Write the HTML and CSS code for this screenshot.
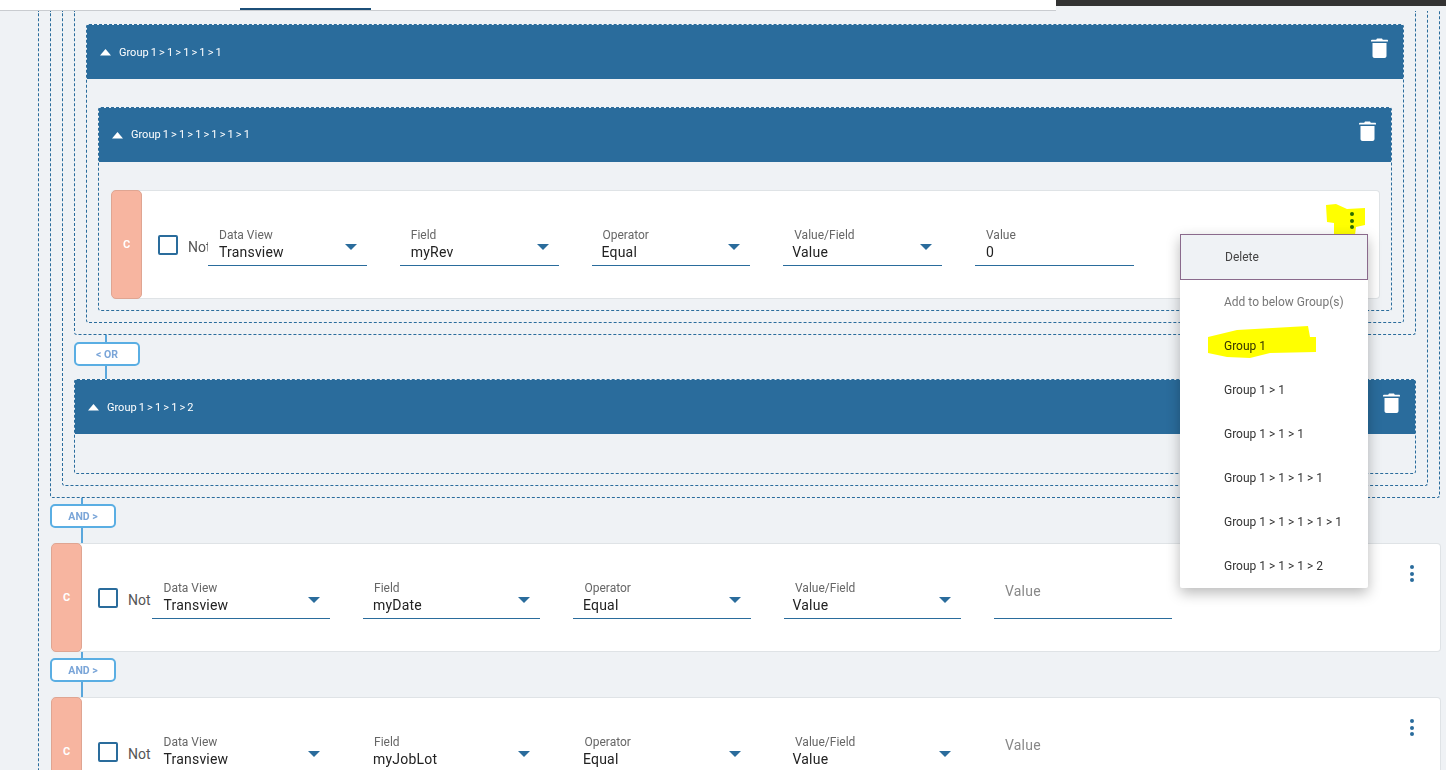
FILE: index.html
```html
<!DOCTYPE html>
<html lang="en">
<head>
<meta charset="utf-8">
<title>Query builder</title>
<link rel="stylesheet" href="styles.css">
</head>
<body>
<svg class="defs" width="0" height="0" aria-hidden="true">
  <symbol id="trash" viewBox="0 0 17 20"><path d="M6 0.5h5l.8 1.3H16c.6 0 1 .4 1 .9v.8H0v-.8c0-.5.4-.9 1-.9h4.200z"/><path d="M1.500 5h14v13c0 1.100-.9 2-2 2h-10c-1.100 0-2-.9-2-2z"/></symbol>
  <symbol id="caret" viewBox="0 0 11 7"><path d="M5.500 0L11 6.500H0z"/></symbol>
</svg>
<div class="page">
  <header class="topbar">
    <div class="nav"><span class="tab"></span></div>
    <div class="dark"></div>
  </header>
  <main class="canvas">
    <div class="box box-root open-top">
      <div class="box box-outer open-top">
        <div class="box-body pad-none">
          <div class="box box-inner open-top">
            <div class="box-body pad-none">
              <div class="box box-g1 open-top">
                <div class="box-body pad-first">
                  <section class="box">
                    <div class="head"><svg class="caret"><use href="#caret"/></svg><span>Group 1 &gt; 1 &gt; 1 &gt; 1 &gt; 1</span><svg class="trash"><use href="#trash"/></svg></div>
                    <div class="box-body">
                      <section class="box">
                        <div class="head head-deep"><svg class="caret"><use href="#caret"/></svg><span>Group 1 &gt; 1 &gt; 1 &gt; 1 &gt; 1 &gt; 1</span><svg class="trash"><use href="#trash"/></svg></div>
                        <div class="box-body">
                          <article class="card narrow">
                            <div class="bar">C</div>
                            <span class="check"></span>
                            <span class="not clipped">Not</span>
                            <div class="fields">
                              <div class="field"><label>Data View</label><div class="value">Transview</div><i class="arrow"></i></div>
                              <div class="field"><label>Field</label><div class="value">myRev</div><i class="arrow"></i></div>
                              <div class="field"><label>Operator</label><div class="value">Equal</div><i class="arrow"></i></div>
                              <div class="field"><label>Value/Field</label><div class="value">Value</div><i class="arrow"></i></div>
                              <div class="field"><label>Value</label><div class="value">0</div></div>
                            </div>
                            <div class="dots on">
                              <svg class="mark" viewBox="0 0 40 31"><polygon points="0,1 10,0 21,5 39,4 39,21 30,23 29,31 8,31 8,19 1,18"/></svg>
                              <b></b><b></b><b></b>
                            </div>
                          </article>
                        </div>
                      </section>
                    </div>
                  </section>
                </div>
              </div>
              <div class="link link-or">
                <i class="stem s7"></i><span class="chip">&lt; OR</span><i class="stem s13"></i>
              </div>
              <section class="box box-g2">
                <div class="head"><svg class="caret"><use href="#caret"/></svg><span>Group 1 &gt; 1 &gt; 1 &gt; 2</span><svg class="trash"><use href="#trash"/></svg></div>
                <div class="empty"></div>
              </section>
            </div>
          </div>
        </div>
      </div>
      <div class="link">
        <i class="stem s6"></i><span class="chip">AND &gt;</span><i class="stem s15"></i>
      </div>
      <article class="card wide">
        <div class="bar">C</div>
        <span class="check"></span>
        <span class="not">Not</span>
        <div class="fields">
          <div class="field"><label>Data View</label><div class="value">Transview</div><i class="arrow"></i></div>
          <div class="field"><label>Field</label><div class="value">myDate</div><i class="arrow"></i></div>
          <div class="field"><label>Operator</label><div class="value">Equal</div><i class="arrow"></i></div>
          <div class="field"><label>Value/Field</label><div class="value">Value</div><i class="arrow"></i></div>
          <div class="field placeholder"><label>Value</label></div>
        </div>
        <div class="dots"><b></b><b></b><b></b></div>
      </article>
      <div class="link">
        <i class="stem s6"></i><span class="chip">AND &gt;</span><i class="stem s15"></i>
      </div>
      <article class="card wide">
        <div class="bar">C</div>
        <span class="check"></span>
        <span class="not">Not</span>
        <div class="fields">
          <div class="field"><label>Data View</label><div class="value">Transview</div><i class="arrow"></i></div>
          <div class="field"><label>Field</label><div class="value">myJobLot</div><i class="arrow"></i></div>
          <div class="field"><label>Operator</label><div class="value">Equal</div><i class="arrow"></i></div>
          <div class="field"><label>Value/Field</label><div class="value">Value</div><i class="arrow"></i></div>
          <div class="field placeholder"><label>Value</label></div>
        </div>
        <div class="dots"><b></b><b></b><b></b></div>
      </article>
    </div>
  </main>
  <nav class="menu">
    <div class="item item-delete">Delete</div>
    <div class="item item-title">Add to below Group(s)</div>
    <div class="item">Group 1<svg class="mark mark-item" viewBox="0 0 108 32"><polygon points="0,11 29,4 100,0 102,11 108,11 108,26 62,27 42,32 19,31 0,27"/></svg></div>
    <div class="item">Group 1 &gt; 1</div>
    <div class="item">Group 1 &gt; 1 &gt; 1</div>
    <div class="item">Group 1 &gt; 1 &gt; 1 &gt; 1</div>
    <div class="item">Group 1 &gt; 1 &gt; 1 &gt; 1 &gt; 1</div>
    <div class="item">Group 1 &gt; 1 &gt; 1 &gt; 2</div>
  </nav>
</div>
</body>
</html>
```
FILE: styles.css
```css
* { box-sizing: border-box; }
html, body { margin: 0; height: 100%; overflow: hidden; }
body { background: #eff2f5; font-family: Roboto, "Noto Sans", sans-serif; color: #222; }
.defs { position: absolute; }
.page { position: relative; width: 1446px; height: 770px; overflow: hidden; }

.topbar { display: flex; height: 11px; }
.nav { width: 1056px; height: 11px; background: #fff; border-bottom: 1px solid #c9ccd0; padding-left: 240px; }
.tab { display: block; width: 131px; height: 10px; border-bottom: 2px solid #1c4f78; }
.dark { flex: 1; height: 6px; background: #333; }

.canvas { padding-left: 38px; height: 759px; overflow: hidden; }

.box { border: 1px dashed #2a6c9c; border-radius: 3px; }
.open-top { border-top: 0; border-top-left-radius: 0; border-top-right-radius: 0; }
.box-root { width: 1414px; padding: 0 10px 0 11px; border-bottom: 0; }
.box-outer { width: 1390px; padding: 0 11px 11px; }
.box-inner { padding: 0 11px 11px; }
.box-body { padding: 28px 11px 11px; }
.box-body.pad-none { padding: 0; }
.box-body.pad-first { padding-top: 13px; }
.box-g2 .empty { height: 39px; }

.head { display: flex; align-items: center; height: 54px; background: #2a6c9c; color: #fff; font-size: 11px; word-spacing: -.6px; padding: 0 15px 0 13px; }
.head-deep span { margin-top: -2px; }
.caret { width: 11px; height: 7px; fill: #fff; margin-right: 8px; flex: none; }
.trash { width: 17px; height: 20px; fill: #fff; margin-left: auto; margin-top: -8px; flex: none; }

.card { display: flex; align-items: flex-start; position: relative; height: 109px; margin-left: 1px; background: #fff; border: 1px solid #dfe3e6; border-left: 0; border-radius: 4px; }
.bar { width: 31px; height: calc(100% + 2px); margin-top: -1px; flex: none; display: flex; align-items: center; justify-content: center; background: #f7b5a0; border: 1px solid #dfa592; border-radius: 5px; color: #fff; font-size: 11px; font-weight: 700; }
.check { width: 20px; height: 20px; flex: none; margin: 44px 0 0 16px; border: 2px solid #2a6c9c; border-radius: 2px; }
.not { flex: none; margin: 47px 0 0 10px; font-size: 14px; line-height: 18px; color: #555; }
.not.clipped { width: 20px; overflow: hidden; }

.fields { display: flex; gap: 33px; flex: none; }
.narrow .field { width: 158.750px; }
.wide .field { width: 177.500px; padding-left: 11.500px; }
.wide .not { width: 24px; }
.field { position: relative; height: 75px; padding: 37px 0 0 11px; border-bottom: 1px solid #2a6c9c; flex: none; }
.field label { display: block; font-size: 12px; line-height: 15px; color: #666; }
.value { font-size: 14px; line-height: 18px; color: #222; letter-spacing: .2px; }
.narrow .field:nth-child(3) .value { margin-left: -1px; }
.narrow .field:nth-child(4) .value { margin-left: -2px; }
.wide .field:nth-child(2) .value { margin-left: -1px; }
.wide .field:nth-child(3) .value { margin-left: -1.500px; }
.wide .field:nth-child(4) .value { margin-left: -2.500px; }
.arrow { position: absolute; right: 10px; top: 53px; width: 0; height: 0; border: 6px solid transparent; border-top: 6px solid #2a6c9c; border-bottom: 0; }
.field.placeholder { padding-top: 38px; padding-left: 11px; }
.placeholder label { font-size: 14px; line-height: 18px; color: #888; letter-spacing: .2px; }

.dots { position: absolute; right: 25px; top: 21px; display: flex; flex-direction: column; gap: 2.500px; width: 4px; }
.wide .dots { right: 26px; }
.dots b { width: 4px; height: 4px; border-radius: 50%; background: #2a6c9c; }
.mark { position: absolute; fill: #ffff00; mix-blend-mode: multiply; }
.dots .mark { left: -24px; top: -8px; width: 40px; height: 31px; }

.link { display: flex; flex-direction: column; width: 66px; }
.stem { display: block; width: 2px; margin-left: 31px; background: #5aa7dc; }
.s6 { height: 6px; } .s7 { height: 7px; } .s13 { height: 13px; } .s15 { height: 15px; }
.chip { height: 24px; border: 2px solid #5aaee3; border-radius: 5px; background: #fff; color: #7aa5d8; font-size: 10.500px; font-weight: 700; line-height: 21px; text-align: center; }

.menu { position: absolute; left: 1180px; top: 234px; width: 188px; height: 354px; background: #fff; border-radius: 2px; box-shadow: 0 5px 14px rgba(0,0,0,.28); }
.item { position: relative; height: 44px; padding-left: 44px; font-size: 12px; line-height: 44px; color: #333; white-space: nowrap; }
.item-delete { height: 46px; background: #eff2f5; border: 1px solid #8a6a8c; line-height: 44px; color: #444; }
.item-title { color: #777; }
.mark-item { left: 28px; top: 2px; width: 108px; height: 32px; }
```
